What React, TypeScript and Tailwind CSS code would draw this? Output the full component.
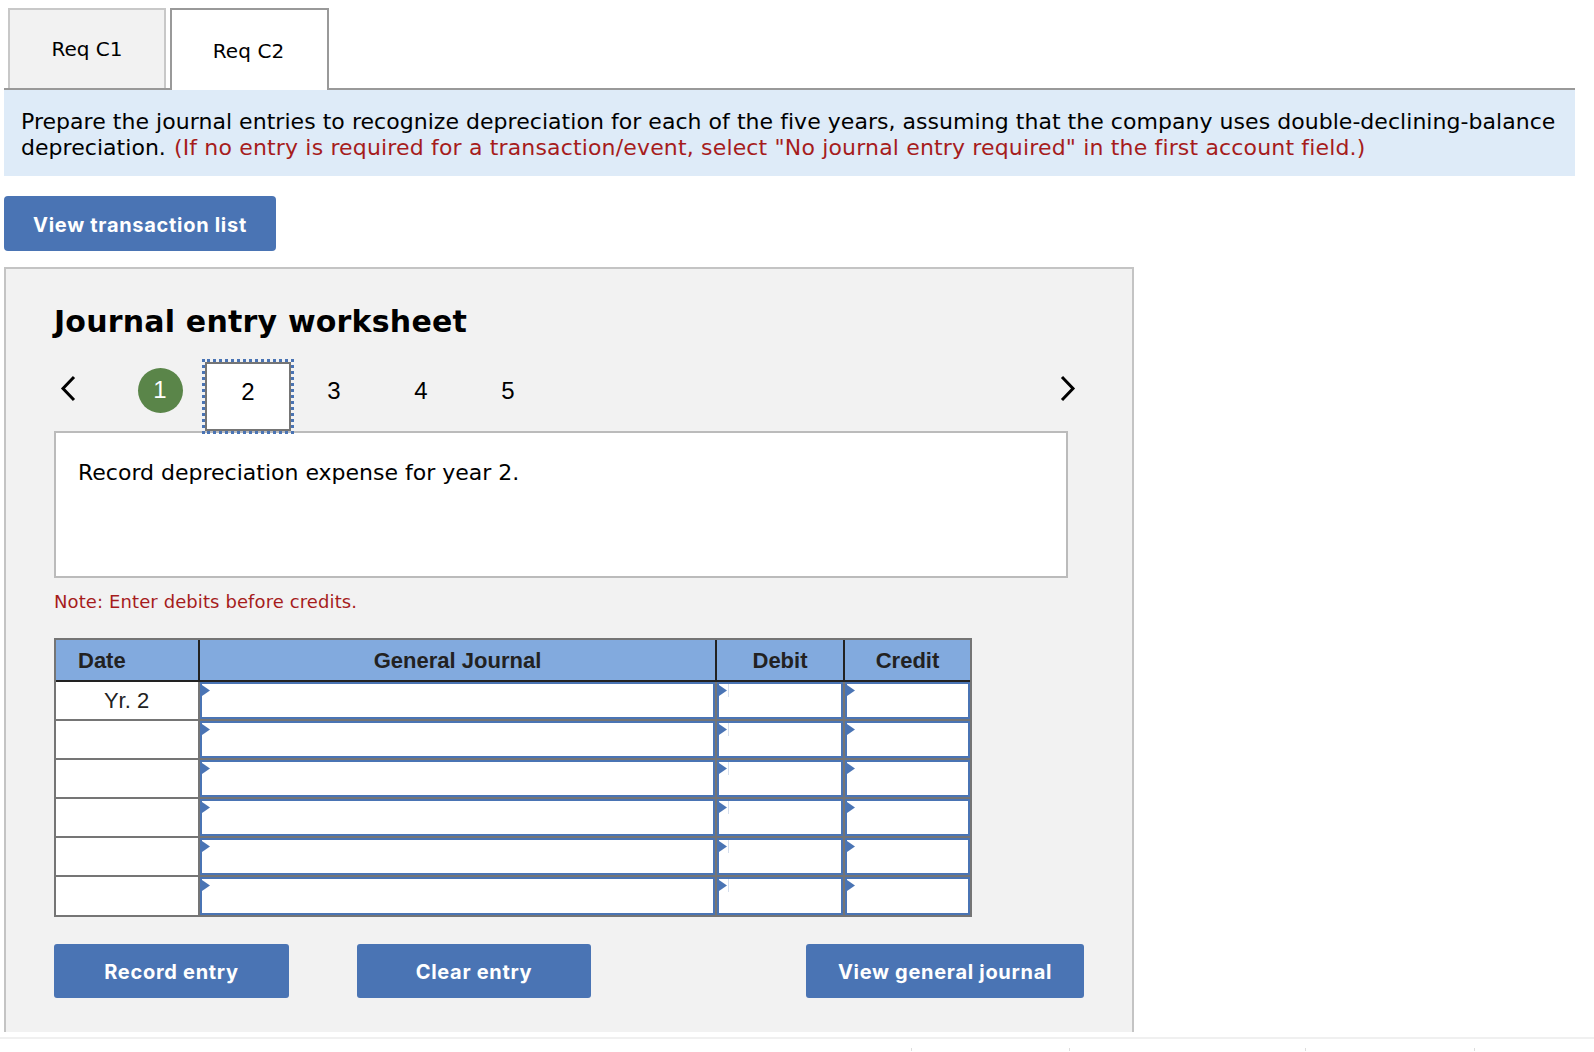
const sans = "font-['DejaVu_Sans',Verdana,sans-serif]"
const arial = "font-['Liberation_Sans',Arial,sans-serif]"

const rows = ['Yr. 2', '', '', '', '', '']

function Marker({ line }: { line?: boolean }) {
  return (
    <>
      <svg className="absolute left-0 top-[1px]" width="8" height="11" viewBox="0 0 8 11">
        <path d="M0 0 L8 5.5 L0 11 Z" fill="#4a74b4" />
      </svg>
      {line && <div className="absolute left-[9px] top-0 h-[13px] w-px bg-[#d5deec]" />}
    </>
  )
}

function EntryCell({ width, line, last }: { width: string; line?: boolean; last?: boolean }) {
  return (
    <div className={`${width} ${last ? '' : 'border-r-2 border-[#757575]'} shrink-0`}>
      <div className="relative h-full border-2 border-[#4a74b4] bg-white">
        <Marker line={line} />
      </div>
    </div>
  )
}

function Chevron({ flip }: { flip?: boolean }) {
  return (
    <svg width="16" height="27" viewBox="0 0 16 27" className={flip ? 'rotate-180' : ''}>
      <path d="M14 2 L3 13.5 L14 25" fill="none" stroke="#000" strokeWidth="3" />
    </svg>
  )
}

function ActionButton({ label, width }: { label: string; width: string }) {
  return (
    <button className={`${width} h-[54px] rounded-[3px] bg-[#4a74b4] pt-[2px] font-['Inter',sans-serif] text-[20px] font-bold tracking-[0.7px] text-white`}>
      {label}
    </button>
  )
}

export default function App() {
  return (
    <div className={`h-[1052px] w-[1594px] overflow-hidden bg-white pt-2 text-black ${sans}`}>
      {/* Tabs */}
      <div className="ml-1 flex h-[82px] w-[1571px] gap-1 border-b-2 border-[#999] pl-1">
        <div className="flex h-[80px] w-[158px] items-center justify-center border-2 border-b-0 border-[#c8c8c8] bg-[#f2f2f2] text-[20px]">
          Req C1
        </div>
        <div className="z-10 flex h-[82px] w-[159px] items-center justify-center border-2 border-b-0 border-[#999] bg-white pr-[2px] pt-[2px] text-[20px] tracking-[0.1px]">
          Req C2
        </div>
      </div>

      <div className="ml-1 w-[1571px]">
        <div className="h-[86px] bg-[#deebf8] pl-[17px] pr-2 pt-[19px] text-[22px] leading-[26px] tracking-[0.04px]">
          <div>Prepare the journal entries to recognize depreciation for each of the five years, assuming that the company uses double-declining-balance</div>
          <div className="flex gap-[8px]">
            <span>depreciation.</span>
            <span className="tracking-[0.16px] text-[#a61c1c]">
              (If no entry is required for a transaction/event, select "No journal entry required" in the first account field.)
            </span>
          </div>
        </div>

        <button className="mt-5 h-[55px] w-[272px] rounded-[4px] bg-[#4a74b4] pt-[2px] font-['Inter',sans-serif] text-[20px] font-bold tracking-[0.7px] text-white">
          View transaction list
        </button>

        {/* Worksheet */}
        <div className="mt-[16px] h-[765px] w-[1130px] border-2 border-b-0 border-[#c4c4c4] bg-[#f2f2f2] pl-[48px] pt-[33px]">
          <h2 className="text-[30px] font-bold leading-[40px] tracking-[0.2px]">Journal entry worksheet</h2>

          <div className={`relative z-10 mt-[17px] flex h-[75px] w-[1022px] items-center text-[24px] ${arial}`}>
            <div className="mb-[17px] ml-[6px] mr-[62px] flex">
              <Chevron />
            </div>
            <div className="mb-[13px] flex h-[45px] w-[45px] items-center justify-center rounded-full bg-[#5a8549] pr-px text-white">
              1
            </div>
            <div className="ml-[19px] flex h-[75px] w-[92px] items-center justify-center border-[3px] border-dotted border-[#4a74b4]">
              <div className="flex h-full w-full items-center justify-center border-2 border-[#757575] bg-white pb-[9px]">2</div>
            </div>
            <div className="mb-[11px] ml-[29px] w-[22px] text-center">3</div>
            <div className="mb-[11px] ml-[65px] w-[22px] text-center">4</div>
            <div className="mb-[11px] ml-[65px] w-[22px] text-center">5</div>
            <div className="mb-[17px] ml-auto flex">
              <Chevron flip />
            </div>
          </div>

          <div className="-mt-[3px] h-[147px] w-[1014px] border-2 border-[#bbb] bg-white pl-[22px] pt-[26px] text-[22px] leading-[28px]">
            Record depreciation expense for year 2.
          </div>

          <p className="mt-[12px] text-[18px] leading-[24px] tracking-[0.1px] text-[#a61c1c]">Note: Enter debits before credits.</p>

          {/* Journal table */}
          <div className={`mt-[24px] w-[918px] border-2 border-[#757575] ${arial}`}>
            <div className="flex h-[42px] border-b-2 border-[#222] bg-[#82aade] text-[22px] font-bold text-[#222]">
              <div className="w-[144px] shrink-0 border-r-2 border-[#222] pl-[22px] leading-[42px]">Date</div>
              <div className="w-[517px] shrink-0 border-r-2 border-[#222] text-center leading-[42px]">General Journal</div>
              <div className="w-[128px] shrink-0 border-r-2 border-[#222] text-center leading-[42px]">Debit</div>
              <div className="flex-1 text-center leading-[42px]">Credit</div>
            </div>
            {rows.map((date, i) => (
              <div key={i} className={`flex ${i < rows.length - 1 ? 'h-[39px] border-b-2 border-[#757575]' : 'h-[38px]'}`}>
                <div className="w-[144px] shrink-0 border-r-2 border-[#757575] bg-white pr-px text-center text-[22px] leading-[38px] text-[#222]">
                  {date}
                </div>
                <EntryCell width="w-[517px]" />
                <EntryCell width="w-[128px]" line />
                <EntryCell width="w-[125px]" last />
              </div>
            ))}
          </div>

          <div className="mt-[27px] flex w-[1030px]">
            <ActionButton label="Record entry" width="w-[235px]" />
            <div className="ml-[68px]">
              <ActionButton label="Clear entry" width="w-[234px]" />
            </div>
            <div className="ml-auto">
              <ActionButton label="View general journal" width="w-[278px]" />
            </div>
          </div>
        </div>
      </div>

      <div className="mt-[5px] h-[14px] border-t-2 border-[#f0f0f0] pt-[9px]">
        <div className="flex h-[3px]">
          <div className="ml-[911px] w-px bg-[#ddd]" />
          <div className="ml-[157px] w-px bg-[#ddd]" />
          <div className="ml-[235px] w-px bg-[#ddd]" />
          <div className="ml-[168px] w-px bg-[#ddd]" />
        </div>
      </div>
    </div>
  )
}
